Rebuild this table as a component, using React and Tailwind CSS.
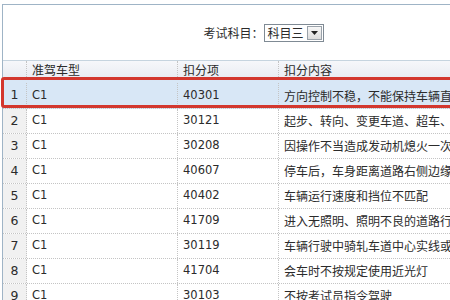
import React from "react";

const rows = [
  ["1", "C1", "40301", "方向控制不稳，不能保持车辆直线运行"],
  ["2", "C1", "30121", "起步、转向、变更车道、超车、停车前不使用或错误使用转向灯"],
  ["3", "C1", "30208", "因操作不当造成发动机熄火一次"],
  ["4", "C1", "40607", "停车后，车身距离道路右侧边缘线超出规定"],
  ["5", "C1", "40402", "车辆运行速度和挡位不匹配"],
  ["6", "C1", "41709", "进入无照明、照明不良的道路行驶时不使用远光灯"],
  ["7", "C1", "30119", "车辆行驶中骑轧车道中心实线或者车道边缘实线"],
  ["8", "C1", "41704", "会车时不按规定使用近光灯"],
  ["9", "C1", "30103", "不按考试员指令驾驶"],
];

const cjk = { fontFamily: '"Noto Sans CJK SC", "Microsoft YaHei", sans-serif' };
const lat = { fontFamily: '"DejaVu Sans", "Noto Sans CJK SC", sans-serif' };

export default function App() {
  return (
    <div className="relative w-[450px] h-[300px] overflow-hidden bg-white pt-[4px] pl-[2px] text-[#2b2b2b]">
      <div className="w-[522px] border-t border-l border-[#9fb4c6]">
        {/* top filter panel */}
        <div className="h-[56px] flex items-center justify-center border-b border-[#c6d4df] bg-white">
          <span className="text-[12px] leading-none" style={cjk}>考试科目：</span>
          <div className="flex items-center h-[18px] w-[60px] border border-[#7f8a94] bg-white">
            <span className="pl-[3px] text-[12px] leading-none flex-1" style={cjk}>科目三</span>
            <div className="w-[15px] h-[14px] mr-[1px] border border-[#9aa2aa] bg-gradient-to-b from-[#f7f7f7] to-[#dcdcdc] flex items-center justify-center">
              <svg width="7" height="4" viewBox="0 0 7 4">
                <path d="M0 0 L7 0 L3.5 4 Z" fill="#222" />
              </svg>
            </div>
          </div>
        </div>
        {/* header row */}
        <div className="grid grid-cols-[24px_151px_101px_1fr] h-[19px] bg-gradient-to-b from-[#f6f7fa] to-[#e8ebf1] border-b border-[#d3d8e0]">
          <div className="border-r border-dotted border-[#c4c4c4]" />
          <div className="pl-[5px] flex items-center text-[12px] border-r border-dotted border-[#c4c4c4]" style={cjk}>准驾车型</div>
          <div className="pl-[5px] flex items-center text-[12px] border-r border-dotted border-[#c4c4c4]" style={cjk}>扣分项</div>
          <div className="pl-[5px] flex items-center text-[12px]" style={cjk}>扣分内容</div>
        </div>
        {rows.map((r, i) => (
          <div
            key={r[0]}
            className={
              "grid grid-cols-[24px_151px_101px_1fr] border-b border-dotted border-[#c4c4c4] " +
              (i === 0 ? "h-[29px] bg-[#d8e7f6] pt-[3px]" : "h-[25px] bg-white")
            }
          >
            <div
              className={
                "flex items-center justify-center text-[12.5px] border-r border-dotted border-[#c4c4c4] " +
                (i === 0 ? "" : "bg-[#f1f1f1]")
              }
              style={lat}
            >
              {r[0]}
            </div>
            <div className="pl-[5px] flex items-center text-[11.5px] border-r border-dotted border-[#c4c4c4]" style={lat}>{r[1]}</div>
            <div className="pl-[5px] flex items-center text-[11.5px] border-r border-dotted border-[#c4c4c4]" style={lat}>{r[2]}</div>
            <div className="pl-[5px] flex items-center text-[12px] whitespace-nowrap overflow-hidden" style={cjk}>{r[3]}</div>
          </div>
        ))}
      </div>
      {/* red highlight annotation */}
      <div className="absolute left-[1px] top-[77px] w-[470px] h-[31px] border-[3px] border-[#d3372e] rounded-[3px] pointer-events-none" />
    </div>
  );
}
